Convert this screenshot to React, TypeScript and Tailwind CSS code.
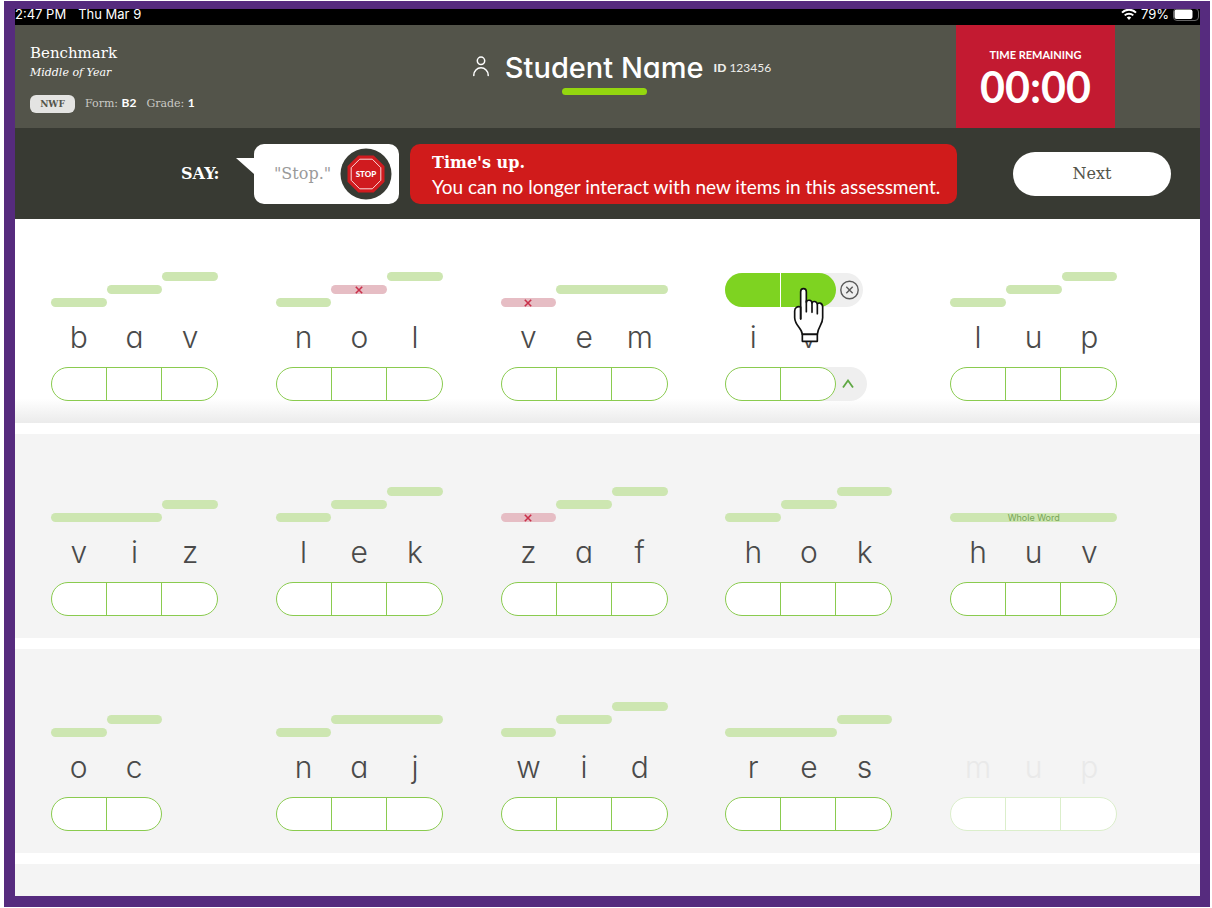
import { clsx } from 'clsx';

type Level = 0 | 1 | 2;

interface Bar {
  start: 1 | 2 | 3;
  span: 1 | 2 | 3;
  level: Level;
  wrong?: boolean;
  label?: string;
}

interface Word {
  text: string;
  bars: Bar[];
  active?: boolean;
  disabled?: boolean;
}

const startClass = { 1: 'col-start-1', 2: 'col-start-2', 3: 'col-start-3' };
const spanClass = { 1: 'col-end-[span_1]', 2: 'col-end-[span_2]', 3: 'col-end-[span_3]' };
const levelClass = { 0: 'row-start-3', 1: 'row-start-2', 2: 'row-start-1' };

const b0: Bar = { start: 1, span: 1, level: 0 };
const b1: Bar = { start: 2, span: 1, level: 1 };
const b2: Bar = { start: 3, span: 1, level: 2 };

const rows: Word[][] = [
  [
    { text: 'bav', bars: [b0, b1, b2] },
    { text: 'nol', bars: [b0, { ...b1, wrong: true }, b2] },
    { text: 'vem', bars: [{ ...b0, wrong: true }, { start: 2, span: 2, level: 1 }] },
    { text: 'iv', bars: [], active: true },
    { text: 'lup', bars: [b0, b1, b2] },
  ],
  [
    { text: 'viz', bars: [{ start: 1, span: 2, level: 0 }, { start: 3, span: 1, level: 1 }] },
    { text: 'lek', bars: [b0, b1, b2] },
    { text: 'zaf', bars: [{ ...b0, wrong: true }, b1, b2] },
    { text: 'hok', bars: [b0, b1, b2] },
    { text: 'huv', bars: [{ start: 1, span: 3, level: 0, label: 'Whole Word' }] },
  ],
  [
    { text: 'oc', bars: [b0, b1] },
    { text: 'naj', bars: [b0, { start: 2, span: 2, level: 1 }] },
    { text: 'wid', bars: [b0, b1, b2] },
    { text: 'res', bars: [{ start: 1, span: 2, level: 0 }, { start: 3, span: 1, level: 1 }] },
    { text: 'mup', bars: [], disabled: true },
  ],
];

function StatusBar() {
  return (
    <div className="flex h-4 items-start justify-between overflow-hidden bg-black text-[13px] leading-[10px] text-white font-['Inter',sans-serif]">
      <div className="flex gap-3">
        <span>2:47 PM</span>
        <span>Thu Mar 9</span>
      </div>
      <div className="flex h-[10px] items-center gap-1">
        <svg width="16" height="12" viewBox="0 0 16 12" fill="none" stroke="currentColor" strokeWidth="2">
          <path d="M1 4.6a10 10 0 0 1 14 0" />
          <path d="M3.7 7.4a6.2 6.2 0 0 1 8.6 0" />
          <path d="M8 12 5.8 9.6a3.2 3.2 0 0 1 4.4 0z" fill="currentColor" stroke="none" />
        </svg>
        <span>79%</span>
        <svg width="27" height="13" viewBox="0 0 27 13">
          <rect x="0.5" y="0.5" width="25" height="12" rx="3.5" fill="none" stroke="#666" />
          <rect x="1.5" y="1.5" width="18" height="9.5" rx="2" fill="#fff" />
        </svg>
      </div>
    </div>
  );
}

function Header() {
  return (
    <header className="grid h-[103px] grid-cols-[1fr_auto_1fr] bg-[#53544a] text-white">
      <div className="pt-4 pl-[15px] font-['DejaVu_Serif',serif]">
        <h2 className="text-[15px] leading-6">Benchmark</h2>
        <p className="text-[11px] leading-4 italic">Middle of Year</p>
        <div className="mt-3.5 flex items-center gap-2.5 text-[11px] leading-[18px] text-[#c9c9c4]">
          <span className="w-[45px] rounded-md bg-[#e4e4e2] text-center text-[9px] leading-[18px] font-bold text-[#53544a]">
            NWF
          </span>
          <span>
            Form: <b className="text-xs text-white font-['Lato',sans-serif]">B2</b>
          </span>
          <span>
            Grade: <b className="text-xs text-white font-['Lato',sans-serif]">1</b>
          </span>
        </div>
      </div>

      <div className="flex items-start pt-[22px] pl-7">
        <svg className="mt-2 mr-[15px]" width="18" height="22" viewBox="0 0 18 22" fill="none" stroke="#fff" strokeWidth="1.5" strokeLinecap="round">
          <circle cx="9" cy="5.8" r="3.7" />
          <path d="M1.8 20.5v-.5a7.2 7.2 0 0 1 14.4 0v.5" />
        </svg>
        <div className="flex flex-col items-center">
          <h1 className="text-[29px] leading-[41px] font-medium font-['Inter',sans-serif] [font-feature-settings:'cv11']">
            Student Name
          </h1>
          <span className="h-[7px] w-[85px] rounded-full bg-[#94d60f]" />
        </div>
        <p className="ml-2.5 text-xs leading-[42px] text-[#eeeeec] font-['Lato',sans-serif]">
          <b className="font-black">ID</b> 123456
        </p>
      </div>

      <div className="flex justify-end pr-[85px]">
        <div className="flex w-[159px] flex-col items-center bg-[#c31a31] pt-6 font-['Lato',sans-serif]">
          <span className="text-[11px] leading-3 font-bold">TIME REMAINING</span>
          <span className="text-[43px] leading-[52px] font-bold">00:00</span>
        </div>
      </div>
    </header>
  );
}

function StopSign() {
  return (
    <svg width="52" height="52" viewBox="0 0 52 52">
      <circle cx="26" cy="26" r="25.5" fill="#383a33" />
      <path d="M18.3 7.5h15.4l10.8 10.8v15.4L33.7 44.5H18.3L7.5 33.7V18.3z" fill="#d01b1f" />
      <path d="M19.7 11.2h12.6l8.5 8.5v12.6l-8.5 8.5H19.7l-8.5-8.5V19.7z" fill="none" stroke="#fbd9d9" />
      <text x="26" y="29" textAnchor="middle" fill="#fff" className="text-[8px] font-black font-['Lato',sans-serif]">
        STOP
      </text>
    </svg>
  );
}

function PromptBar() {
  return (
    <section className="flex h-[91px] items-center bg-[#383a33] pr-[29px] pl-[166px] font-['DejaVu_Serif',serif]">
      <span className="w-[55px] text-base font-bold text-white">SAY:</span>
      <svg className="-mt-4" width="18" height="16" viewBox="0 0 18 16">
        <path d="M0 0h18v16z" fill="#fff" />
      </svg>
      <div className="flex h-[60px] w-[145px] items-center justify-between rounded-[10px] bg-white pr-[7px] pl-5 text-base text-[#9a9a9a]">
        <span>"Stop."</span>
        <StopSign />
      </div>
      <div className="ml-[11px] h-[60px] flex-1 rounded-[10px] bg-[#d01b1b] pt-[7px] pl-[22px] text-white">
        <p className="text-base leading-6 font-bold">Time's up.</p>
        <p className="text-[19px] leading-6 whitespace-nowrap font-['Lato',sans-serif]">
          You can no longer interact with new items in this assessment.
        </p>
      </div>
      <button className="ml-14 h-11 w-[158px] rounded-full bg-white text-base text-[#53544a]">Next</button>
    </section>
  );
}

function ScoreBar({ bar }: { bar: Bar }) {
  return (
    <span
      className={clsx(
        'flex h-[9px] items-center justify-center rounded-full',
        startClass[bar.start],
        spanClass[bar.span],
        levelClass[bar.level],
        bar.wrong ? 'bg-[#e6bdc4]' : 'bg-[#cde6b1]'
      )}
    >
      {bar.wrong && (
        <svg width="8" height="8" viewBox="0 0 8 8" stroke="#c9304a" strokeWidth="1.6">
          <path d="M0.8 0.8l6.4 6.4M7.2 0.8L0.8 7.2" />
        </svg>
      )}
      {bar.label && <span className="text-[9px] leading-[9px] text-[#76a557] font-['Inter',sans-serif]">{bar.label}</span>}
    </span>
  );
}

function PointerHand() {
  return (
    <svg className="pointer-events-none absolute top-4 left-[68px]" width="31" height="56" viewBox="280 84 93 168" fill="#fff" stroke="#111" strokeWidth="5" strokeLinejoin="round" strokeLinecap="round">
      <path d="M303 180V98c0-12 17-12 17 0v32c2-9 16-8 17 2 2-7 15-6 16 4 2-7 15-5 16 7v33c0 22-14 26-16 50h-45c-1-18-22-26-23-50v-20c0-10 8-15 18-12z" />
      <path d="M303 144v36M320 126v32M337 132v28M353 138v26" fill="none" />
      <path d="M308 226h45v21h-45z" />
    </svg>
  );
}

function WordCard({ word }: { word: Word }) {
  const letters = word.text.split('');
  const short = letters.length === 2;
  const width = short ? 'w-[111px] grid-cols-2' : 'w-[167px] grid-cols-3';

  return (
    <div className="relative">
      {word.active ? (
        <div className="flex h-9 items-end">
          <div className="flex rounded-full bg-[#efefef]">
            <div className="grid h-[34px] w-[111px] grid-cols-2 overflow-hidden rounded-full bg-[#7ed321]">
              <button aria-label="Sound i, scored" className="border-r border-white" />
              <button aria-label="Sound v, scored" />
            </div>
            <button aria-label="Clear score" className="flex w-[27px] items-center justify-center">
              <svg width="20" height="20" viewBox="0 0 20 20" fill="none" stroke="#5a5a5a" strokeWidth="1.4">
                <circle cx="9.5" cy="10" r="8.7" />
                <path d="M6.3 6.8l6.4 6.4M12.7 6.8l-6.4 6.4" />
              </svg>
            </button>
          </div>
        </div>
      ) : (
        <div className={clsx('grid h-9 content-end grid-rows-[9px_9px_9px] gap-y-1', width)}>
          {word.bars.map((bar) => (
            <ScoreBar key={bar.start} bar={bar} />
          ))}
        </div>
      )}

      <div
        className={clsx(
          "grid text-center text-[30px] leading-[60px] font-light font-['Inter',sans-serif] [font-feature-settings:'cv11']",
          width,
          word.disabled ? 'text-[#e9e9e9]' : 'text-[#4a4a4a]'
        )}
      >
        {letters.map((letter, i) => (
          <span key={i}>{letter}</span>
        ))}
      </div>

      <div className={clsx('flex w-fit rounded-full', word.active && 'bg-[#efefef]')}>
        <div
          className={clsx(
            'grid h-[34px] divide-x overflow-hidden rounded-full border bg-white',
            width,
            word.disabled ? 'divide-[#dbeecb] border-[#dbeecb]' : 'divide-[#8acb4f] border-[#8acb4f]'
          )}
        >
          {letters.map((letter, i) => (
            <button key={i} aria-label={`Mark ${letter}`} disabled={word.disabled} />
          ))}
        </div>
        {word.active && (
          <button aria-label="Expand" className="flex w-[31px] items-center pl-1.5">
            <svg width="12" height="10" viewBox="0 0 12 10" fill="none" stroke="#5fa844" strokeWidth="1.8">
              <path d="M1 8.5l5-7 5 7" />
            </svg>
          </button>
        )}
      </div>

      {word.active && <PointerHand />}
    </div>
  );
}

export default function App() {
  return (
    <div className="flex min-h-screen flex-col bg-white pt-px pr-0.5 pb-px pl-1">
      <div className="flex flex-1 flex-col border-t-8 border-r-[10px] border-b-[11px] border-l-[11px] border-[#562b7e]">
        <StatusBar />
        <Header />
        <PromptBar />
        <main className="flex flex-1 flex-col gap-[11px]">
          {rows.map((row, i) => (
            <div
              key={i}
              className={clsx(
                'grid h-[204px] grid-cols-5 pt-[52px] pr-[25px] pl-9',
                i === 0 ? 'bg-[linear-gradient(to_bottom,#fff_88%,#ebebeb)]' : 'bg-[#f4f4f4]'
              )}
            >
              {row.map((word) => (
                <WordCard key={word.text} word={word} />
              ))}
            </div>
          ))}
          <div className="min-h-7 flex-1 bg-[#f4f4f4]" />
        </main>
      </div>
    </div>
  );
}
